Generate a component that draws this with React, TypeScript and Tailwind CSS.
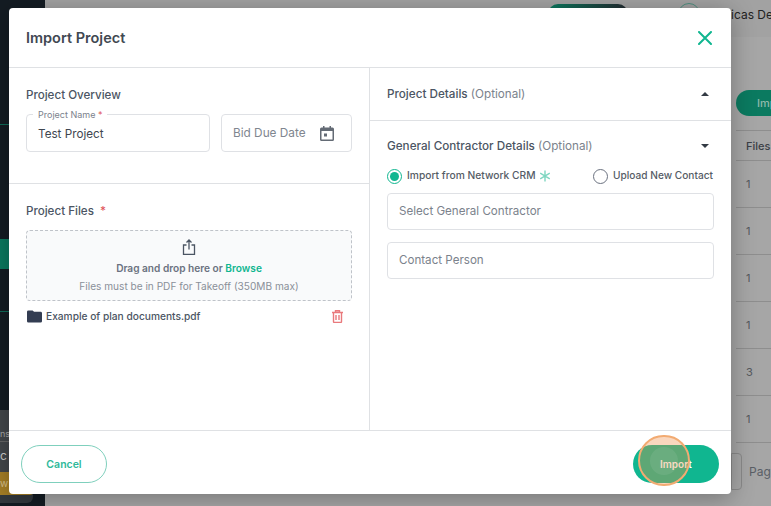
import React from "react";

const Row = ({ v }: { v: string }) => (
  <div className="h-[47px] border-b border-[#8e8e8e] pl-[10px] pt-[15px] text-[11px] leading-[16px] text-[#55595e]">{v}</div>
);

const Radio = ({ on }: { on?: boolean }) => (
  <span className={`flex h-[15px] w-[15px] shrink-0 items-center justify-center rounded-full border-[1.5px] ${on ? "border-[#10b690]" : "border-[#6b7280]"}`}>
    {on && <span className="h-[9px] w-[9px] rounded-full bg-[#10b690]" />}
  </span>
);

export default function App() {
  return (
    <div className="relative flex h-[506px] w-[771px] overflow-hidden bg-[#a0a0a0] font-['Inter',sans-serif]">
      {/* dimmed page behind the dialog */}
      <div className="flex w-[45px] shrink-0 flex-col bg-[#141c23]">
        <div className="mt-[124px] h-px bg-[#0e6b58]" />
        <div className="mt-[114px] h-[30px] bg-[#0b7a60]" />
        <div className="mt-[42px] h-px bg-[#0e6b58]" />
        <div className="mt-[98px] flex h-[93px] w-[33px] flex-col rounded-br-[6px] bg-[#33393e]">
          <div className="h-[32px] border-b border-[#666] bg-[#43474b] pt-[18px] text-[9px] leading-[12px] text-[#aaa]">ns</div>
          <div className="h-[30px] bg-[#43474b] pt-[6px] text-[12px] leading-[16px] text-[#ccc]">c</div>
          <div className="h-[23px] rounded-r-[3px] bg-[#a67f26] text-[10px] leading-[23px] text-[#d8c28a]">w</div>
        </div>
      </div>
      <div className="flex min-w-0 flex-1 flex-col">
        <div className="flex h-[37px] shrink-0 items-start bg-[#a2a2a2]">
          <div className="ml-[503px] mt-[4px] h-[20px] w-[80px] shrink-0 rounded-full bg-[linear-gradient(90deg,#0b7a60,#232a30)]" />
          <div className="ml-[50px] mt-[3px] h-[22px] w-[22px] shrink-0 rounded-full border border-[#4f8f80]" />
          <div className="ml-[22px] mt-[7px] whitespace-nowrap text-[12px] leading-[16px] text-[#222]">Nicas Demo</div>
        </div>
        <div className="flex min-h-0 flex-1 flex-col items-end bg-[#a6a6a6]">
          <div className="mt-[53px] flex h-[26px] w-[35px] items-center self-end overflow-hidden whitespace-nowrap rounded-l-full bg-[#0b7a60] pl-[21px] text-[11px] font-medium text-[#8fb8aa]">
            Import
          </div>
          <div className="mt-[14px] h-[31px] w-[35px] self-end border-y border-[#8e8e8e] pl-[10px] pt-[7px] text-[11px] font-medium leading-[16px] text-[#3c4046]">
            <span className="whitespace-nowrap">Files</span>
          </div>
          <div className="w-[35px] self-end overflow-hidden">
            <Row v="1" />
            <Row v="1" />
            <Row v="1" />
            <Row v="1" />
            <Row v="3" />
            <Row v="1" />
          </div>
        </div>
      </div>
      <div className="absolute left-[731px] top-[453px] h-[37px] w-[11px] rounded-r-[4px] border border-[#8a8a8a]" />
      <div className="absolute left-[749px] top-[464px] text-[12px] leading-[16px] text-[#5a5f66]">Page</div>

      {/* dialog */}
      <div className="absolute left-[9px] top-[8px] flex h-[486px] w-[722px] flex-col overflow-hidden rounded-[4px] bg-white shadow-[0_4px_24px_rgba(0,0,0,0.3)]">
        <header className="flex h-[60px] shrink-0 items-center justify-between border-b border-[#dfe1e4] pl-[17px] pr-[19px] pt-[1px]">
          <h1 className="text-[14.500px] font-semibold text-[#414852]">Import Project</h1>
          <svg width="14" height="14" viewBox="0 0 14 14" fill="none" stroke="#10b690" strokeWidth="2" strokeLinecap="round">
            <path d="M1 1l12 12M13 1L1 13" />
          </svg>
        </header>

        <div className="flex min-h-0 flex-1">
          <div className="flex w-[361px] shrink-0 flex-col border-r border-[#dfe1e4]">
            <section className="h-[116px] shrink-0 border-b border-[#dfe1e4] px-[17px] pt-[19px]">
              <h2 className="text-[11.600px] font-medium leading-[16px] text-[#4b5563]">Project Overview</h2>
              <div className="mt-[11px] flex gap-[11px]">
                <div className="relative h-[38px] w-[184px] rounded-[4px] border border-[#dfe1e5] pl-[11px] pt-[10px] text-[11.700px] leading-[18px] text-[#3f4650]">
                  Test Project
                  <span className="absolute left-[6px] top-[-6px] bg-white px-[5px] text-[9px] leading-[12px] text-[#7b828c]">
                    Project Name <span className="text-[#e0565b]">*</span>
                  </span>
                </div>
                <div className="flex h-[38px] flex-1 items-center justify-between rounded-[4px] border border-[#dfe1e5] pl-[11px] pr-[17px] text-[11.800px] text-[#80868f]">
                  <span className="pt-[1px]">Bid Due Date</span>
                  <svg width="14" height="15" viewBox="0 0 14 15" fill="#646b75">
                    <path fillRule="evenodd" d="M3 0h1.500v1.500h5V0H11v1.500h1.500A1.500 1.500 0 0 1 14 3v10.500a1.500 1.500 0 0 1-1.500 1.500h-11A1.500 1.500 0 0 1 0 13.500V3a1.500 1.500 0 0 1 1.500-1.500H3V0ZM1.500 5v8.500h11V5h-11ZM4 7.500h3v3H4v-3Z" />
                  </svg>
                </div>
              </div>
            </section>
            <section className="flex-1 px-[17px] pt-[19px]">
              <h2 className="text-[11.600px] font-medium leading-[16px] text-[#4b5563]">
                Project Files <span className="ml-[3px] text-[#e0565b]">*</span>
              </h2>
              <div className="mt-[11px] flex h-[71px] flex-col items-center rounded-[4px] border border-dashed border-[#bfc3c9] bg-[#f9fafb] pt-[8px]">
                <svg width="14" height="16" viewBox="0 0 14 16" fill="none" stroke="#4b5563" strokeWidth="1.300">
                  <path d="M4.500 6H1.500v9.300h11V6h-3M7 10.500V1M4.500 3.500 7 1l2.500 2.500" />
                </svg>
                <p className="mt-[5px] text-[10.150px] font-semibold leading-[16px] text-[#6b7280]">
                  Drag and drop here or <span className="text-[#10b690]">Browse</span>
                </p>
                <p className="mt-[2px] text-[10.100px] leading-[16px] text-[#8a9099]">Files must be in PDF for Takeoff (350MB max)</p>
              </div>
              <div className="mt-[7px] flex items-center pr-[9px]">
                <svg width="15" height="13" viewBox="0 0 16 13" fill="#333d52" className="ml-[1px]">
                  <path d="M1.500 0h4.500l1.500 1.500h7A1.500 1.500 0 0 1 16 3v8.500a1.500 1.500 0 0 1-1.500 1.500h-13A1.500 1.500 0 0 1 0 11.500v-10A1.500 1.500 0 0 1 1.500 0Z" />
                </svg>
                <span className="ml-[4px] flex-1 text-[10.200px] font-medium leading-[16px] text-[#4b5563]">Example of plan documents.pdf</span>
                <svg width="11" height="13" viewBox="0 0 11 13" fill="none" stroke="#e9797c" strokeWidth="1.400">
                  <path d="M0 2.500h11M3.500 2.500V.8h4v1.700M1.500 2.500v9a1 1 0 0 0 1 1h6a1 1 0 0 0 1-1v-9M4 5v5M7 5v5" />
                </svg>
              </div>
            </section>
          </div>

          <div className="flex min-w-0 flex-1 flex-col">
            <section className="flex h-[53px] shrink-0 items-center justify-between border-b border-[#dfe1e4] pl-[17px] pr-[22px]">
              <h2 className="pt-[1px] text-[11.700px] font-medium text-[#4b5563]">
                Project Details <span className="font-normal text-[#7b828c]">(Optional)</span>
              </h2>
              <span className="h-0 w-0 border-x-[4px] border-b-[4px] border-x-transparent border-b-[#333a44]" />
            </section>
            <section className="flex-1 pl-[17px] pr-[17px] pt-[16px]">
              <div className="flex items-center justify-between pr-[5px]">
                <h2 className="text-[11.700px] font-medium leading-[18px] text-[#4b5563]">
                  General Contractor Details <span className="font-normal text-[#7b828c]">(Optional)</span>
                </h2>
                <span className="h-0 w-0 border-x-[4px] border-t-[4px] border-x-transparent border-t-[#333a44]" />
              </div>
              <div className="mt-[12px] flex h-[18px] items-center text-[10.250px] font-medium text-[#555c66]">
                <Radio on />
                <span className="ml-[5px]">Import from Network CRM</span>
                <svg width="12" height="12" viewBox="0 0 12 12" fill="none" stroke="#7ed6c0" strokeWidth="1.400" className="ml-[3px]">
                  <path d="M6 .5v11M1.200 3.200l9.600 5.600M10.800 3.200 1.200 8.800" />
                </svg>
                <span className="ml-auto"><Radio /></span>
                <span className="ml-[5px] pr-[1px] text-[10.150px]">Upload New Contact</span>
              </div>
              <div className="mt-[8px] flex h-[37px] items-center rounded-[4px] border border-[#dfe1e5] pl-[11px] pt-[1px] text-[11.600px] text-[#7b828c]">
                Select General Contractor
              </div>
              <div className="mt-[12px] flex h-[37px] items-center rounded-[4px] border border-[#dfe1e5] pl-[11px] pt-[1px] text-[11.600px] text-[#7b828c]">
                Contact Person
              </div>
            </section>
          </div>
        </div>

        <footer className="flex h-[64px] shrink-0 items-center justify-between border-t border-[#dfe1e4] px-[12px] pt-[3px]">
          <button className="flex h-[38px] w-[86px] items-center justify-center rounded-full border border-[#7fd0bd] pt-[1px] text-[10.500px] font-semibold text-[#2fb99a]">
            Cancel
          </button>
          <button className="flex h-[38px] w-[86px] items-center justify-center rounded-full bg-[#10b690] text-[10px] font-semibold text-white">
            Import
          </button>
        </footer>
      </div>

      {/* click highlight over the Import button */}
      <div className="absolute left-[638px] top-[435px] flex h-[51px] w-[52px] items-center justify-center rounded-full border-2 border-[#f2ab72] bg-[rgba(240,140,70,0.35)]">
        <div className="h-[28px] w-[28px] rounded-full bg-[rgba(255,255,255,0.08)]" />
      </div>
    </div>
  );
}
